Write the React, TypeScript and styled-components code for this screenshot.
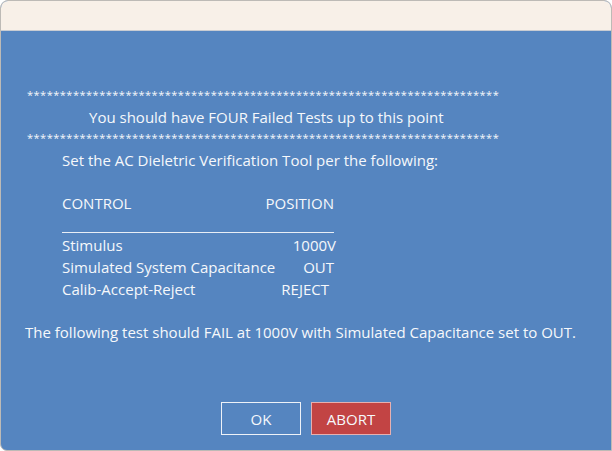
import { createGlobalStyle, styled } from 'styled-components';

const GlobalStyle = createGlobalStyle`
  html, body {
    margin: 0;
    padding: 0;
    background: #ffffff;
  }
  * {
    box-sizing: border-box;
  }
`;

const Window = styled.div`
  width: 612px;
  height: 451px;
  display: flex;
  flex-direction: column;
  border: 1px solid #bdbab6;
  border-radius: 8px 8px 0 7px;
  overflow: hidden;
  background: #5585c0;
  font-family: 'Open Sans', 'Noto Sans', sans-serif;
  font-size: 15px;
  color: #f6f8fb;
`;

const TitleBar = styled.div`
  height: 30px;
  flex: none;
  background: #f8f0e8;
  border-bottom: 1px solid #c9ccd2;
`;

const Body = styled.div`
  flex: 1;
  display: flex;
  flex-direction: column;
  padding: 54px 0 15px 24px;
`;

const Stars = styled.div`
  height: 20px;
  line-height: 20px;
  padding-left: 2px;
  font-size: 11px;
  letter-spacing: 0.5px;
  white-space: nowrap;
`;

const Line = styled.div<{ $indent?: number; $top?: number }>`
  height: 22px;
  line-height: 22px;
  white-space: nowrap;
  padding-left: ${(p) => p.$indent ?? 0}px;
  margin-top: ${(p) => p.$top ?? 0}px;
`;

const Table = styled.div`
  width: 272px;
  margin-left: 37px;
  margin-top: 21px;
  display: flex;
  flex-direction: column;
`;

const Row = styled.div`
  display: flex;
  justify-content: space-between;
  height: 22px;
  line-height: 22px;
  white-space: nowrap;
`;

const Value = styled.span<{ $inset: number }>`
  margin-right: ${(p) => p.$inset}px;
`;

const Rule = styled.div`
  height: 1px;
  background: #e8eef6;
  margin: 18px 0 1px;
`;

const Spacer = styled.div`
  flex: 1;
`;

const Buttons = styled.div`
  display: flex;
  justify-content: center;
  gap: 10px;
  margin-left: -24px;
`;

const Button = styled.button<{ $danger?: boolean }>`
  width: 80px;
  height: 33px;
  border: 1px solid ${(p) => (p.$danger ? '#e6b0b0' : '#eef2f8')};
  background: ${(p) => (p.$danger ? '#c24444' : 'transparent')};
  color: #f6f8fb;
  font-family: inherit;
  font-size: 15px;
  padding: 0;
`;

const STARS = '*'.repeat(72);

const rows = [
  { label: 'Stimulus', value: '1000V', inset: -2 },
  { label: 'Simulated System Capacitance', value: 'OUT', inset: 0 },
  { label: 'Calib-Accept-Reject', value: 'REJECT', inset: 5 },
];

export default function App() {
  return (
    <>
      <GlobalStyle />
      <Window>
        <TitleBar />
        <Body>
          <Stars>{STARS}</Stars>
          <Line $indent={64} $top={1}>
            You should have FOUR Failed Tests up to this point
          </Line>
          <Stars>{STARS}</Stars>
          <Line $indent={37} $top={1}>
            Set the AC Dieletric Verification Tool per the following:
          </Line>
          <Table>
            <Row>
              <span>CONTROL</span>
              <span>POSITION</span>
            </Row>
            <Rule />
            {rows.map((r) => (
              <Row key={r.label}>
                <span>{r.label}</span>
                <Value $inset={r.inset}>{r.value}</Value>
              </Row>
            ))}
          </Table>
          <Line $top={21}>
            The following test should FAIL at 1000V with Simulated Capacitance set to OUT.
          </Line>
          <Spacer />
          <Buttons>
            <Button>OK</Button>
            <Button $danger>ABORT</Button>
          </Buttons>
        </Body>
      </Window>
    </>
  );
}
